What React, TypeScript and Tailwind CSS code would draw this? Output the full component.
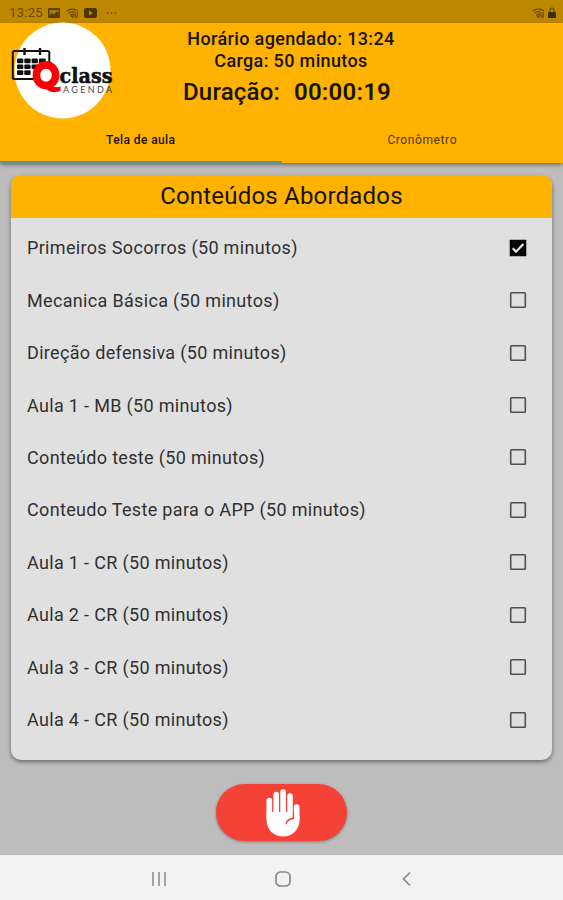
const lessons = [
  'Primeiros Socorros (50 minutos)',
  'Mecanica Básica (50 minutos)',
  'Direção defensiva (50 minutos)',
  'Aula 1 - MB (50 minutos)',
  'Conteúdo teste (50 minutos)',
  'Conteudo Teste para o APP (50 minutos)',
  'Aula 1 - CR (50 minutos)',
  'Aula 2 - CR (50 minutos)',
  'Aula 3 - CR (50 minutos)',
  'Aula 4 - CR (50 minutos)',
];

function Wifi() {
  return (
    <svg width="13" height="12" viewBox="0 0 13 12" fill="none" stroke="#66490a" strokeWidth="1.2">
      <path d="M.7 4Q6 .2 12 4M2.5 6Q6 3.3 9 5.5M4.3 8L6.5 10.5L7.5 7.3Q6 6.6 4.3 8" />
      <path d="M9.2 6v5M11.2 5v6" />
    </svg>
  );
}

function StatusBar() {
  return (
    <div className="flex h-[23px] items-center bg-[#be8700] pl-[9px] pr-[7px] pt-[2px] text-[#66490a]">
      <span className="w-[39px] text-[13.5px] leading-none">13:25</span>
      <svg className="mr-[6px]" width="12" height="12" viewBox="0 0 12 12">
        <rect x="0" y="1" width="12" height="10" rx="1" fill="#594008" />
        <path d="M1.5 8.5L4 6L6 7.5L9 4L10.7 6V3H1.5Z" fill="#a87807" />
      </svg>
      <Wifi />
      <svg className="ml-[5px]" width="13" height="12" viewBox="0 0 13 12">
        <rect y="1" width="13" height="10" rx="2" fill="#4d3805" />
        <path d="M5 3.5L9 6L5 8.5Z" fill="#be8700" />
      </svg>
      <svg className="ml-[9px]" width="11" height="4" viewBox="0 0 11 4" fill="#66490a">
        <circle cx="1.5" cy="2" r=".9" />
        <circle cx="5.5" cy="2" r=".9" />
        <circle cx="9.5" cy="2" r=".9" />
      </svg>
      <div className="ml-auto flex items-center gap-[3px]">
        <Wifi />
        <svg width="8" height="12" viewBox="0 0 8 12">
          <path d="M2 5V3.3Q2 1 4 1T6 3.3V5" fill="none" stroke="#66490a" strokeWidth="1.2" />
          <rect y="5" width="8" height="6" rx=".5" fill="#3f2e05" />
        </svg>
      </div>
    </div>
  );
}

function Logo() {
  return (
    <svg width="120" height="100" viewBox="0 21 120 100">
      <circle cx="62.5" cy="70.5" r="48" fill="#fff" />
      <rect x="12.8" y="51" width="36.5" height="28" rx="1.5" fill="none" stroke="#111" strokeWidth="2" />
      <path d="M24.5 48v7M40 48v7" stroke="#111" strokeWidth="2.4" />
      <g fill="#111">
        <rect x="17" y="58.5" width="6.3" height="4.7" rx="1" />
        <rect x="24.3" y="58.5" width="6.3" height="4.7" rx="1" />
        <rect x="31.6" y="58.5" width="6.3" height="4.7" rx="1" />
        <rect x="38.9" y="58.5" width="6.8" height="4.7" rx="1" />
        <rect x="17" y="64.4" width="6.3" height="4.7" rx="1" />
        <rect x="24.3" y="64.4" width="6.3" height="4.7" rx="1" />
        <rect x="31.6" y="64.4" width="6.3" height="4.7" rx="1" />
        <rect x="17" y="70.3" width="6.3" height="4.7" rx="1" />
        <rect x="24.3" y="70.3" width="6.3" height="4.7" rx="1" />
      </g>
      <ellipse cx="46" cy="75.2" rx="9.6" ry="10.3" fill="#fff" stroke="#f70006" strokeWidth="7.6" />
      <path d="M40 84Q47 80 51 85Q54 88.5 60.5 86.5V91Q51 94 46 89Z" fill="#f70006" />
      <text
        x="59.5"
        y="83"
        textLength="53"
        lengthAdjust="spacingAndGlyphs"
        className="font-['DejaVu_Serif',serif] text-[20px] font-bold"
        fill="#111"
        stroke="#111"
        strokeWidth=".5"
      >
        class
      </text>
      <text x="63" y="93.3" textLength="49" className="font-['Lato',sans-serif] text-[9px]" fill="#444">
        AGENDA
      </text>
    </svg>
  );
}

function Checkbox({ checked }: { checked: boolean }) {
  return (
    <svg width="18" height="18" viewBox="0 0 18 18" role="checkbox" aria-checked={checked}>
      {checked ? (
        <>
          <rect x=".7" y=".7" width="16.6" height="16.6" rx=".6" fill="#080808" />
          <path d="M3.8 9.3L7 12.7L14.4 5" fill="none" stroke="#e8e8e8" strokeWidth="2.2" />
        </>
      ) : (
        <rect x="1.7" y="1.7" width="14.6" height="14.6" rx=".8" fill="none" stroke="#505050" strokeWidth="1.6" />
      )}
    </svg>
  );
}

function Hand() {
  return (
    <svg width="36" height="50" viewBox="0 0 36 50">
      <g stroke="#fff" strokeWidth="5.6" strokeLinecap="round">
        <path d="M4.3 12.5V30M11.2 6.5V26M18.1 4V26M25 8V26M31.7 19V32" />
      </g>
      <path d="M1.5 24H27.8V31L34.5 28V32C34.5 42 27 48.5 18.5 48.5C8.5 48.5 1.5 42 1.5 31Z" fill="#fff" />
      <path d="M21 36.3Q21.5 31.3 28.4 30.2V24" fill="none" stroke="#f44336" strokeWidth="1.4" />
    </svg>
  );
}

export default function App() {
  return (
    <div className="flex h-[900px] w-[563px] flex-col overflow-hidden bg-[#bdbdbd] font-['Roboto',sans-serif] text-[#161307]">
      <StatusBar />
      <header className="h-[140px] shrink-0 bg-[#ffb300] shadow-[0_2px_4px_rgba(0,0,0,0.4)]">
        <div className="flex h-[97px]">
          <div className="-mt-[2px] w-[120px] shrink-0">
            <Logo />
          </div>
          <div className="flex w-[342px] flex-col items-center pt-[5px] font-medium">
            <p className="text-[18px] leading-[22px] tracking-[0.36px]">Horário agendado: 13:24</p>
            <p className="text-[18px] leading-[22px] tracking-[0.36px]">Carga: 50 minutos</p>
            <p className="mt-[4px] flex gap-[14px] pr-[8px] text-[24px] leading-[32px] tracking-[0.2px]">
              <span>Duração:</span>
              <span className="font-semibold">00:00:19</span>
            </p>
          </div>
        </div>
        <div className="grid h-[43px] grid-cols-2 text-center text-[12px] leading-[40px]">
          <div className="border-b-[2px] border-[#5796a0] font-medium tracking-[0.4px]">Tela de aula</div>
          <div className="text-[#4c3708] tracking-[0.6px]">Cronômetro</div>
        </div>
      </header>
      <main className="flex flex-1 flex-col items-center pt-[12px]">
        <section className="h-[585px] w-[541px] overflow-hidden rounded-[10px] bg-[#e0e0e0] shadow-[0_2px_4px_rgba(0,0,0,0.45)]">
          <h1 className="h-[43px] bg-[#ffb300] text-center text-[24px] leading-[43px] tracking-[0.2px]">Conteúdos Abordados</h1>
          <ul className="pl-[16px] pr-[25px] pt-[3.5px]">
            {lessons.map((lesson, i) => (
              <li key={lesson} className="flex h-[52.45px] items-center justify-between text-[18px] tracking-[0.33px] text-[#303030]">
                <span>{lesson}</span>
                <Checkbox checked={i === 0} />
              </li>
            ))}
          </ul>
        </section>
        <button className="mt-[24px] flex h-[57px] w-[131px] items-center justify-center rounded-full bg-[#f44336] pl-[3px] shadow-[0_1px_3px_rgba(0,0,0,0.35)]">
          <Hand />
        </button>
      </main>
      <nav className="flex h-[45px] shrink-0 items-center bg-[#f2f2f2] pl-[151px] pt-[3px] text-[#888]">
        <svg width="16" height="16" viewBox="0 0 16 16" stroke="currentColor" strokeWidth="1.5">
          <path d="M2 1v14M8 1v14M14 1v14" />
        </svg>
        <svg className="ml-[107px]" width="18" height="18" viewBox="0 0 18 18" fill="none" stroke="currentColor" strokeWidth="1.7">
          <rect x="2" y="2" width="14" height="14" rx="4.5" />
        </svg>
        <svg className="ml-[109px]" width="12" height="16" viewBox="0 0 12 16" fill="none" stroke="currentColor" strokeWidth="1.7">
          <path d="M9 1.5L2.5 8L9 14.5" />
        </svg>
      </nav>
    </div>
  );
}
